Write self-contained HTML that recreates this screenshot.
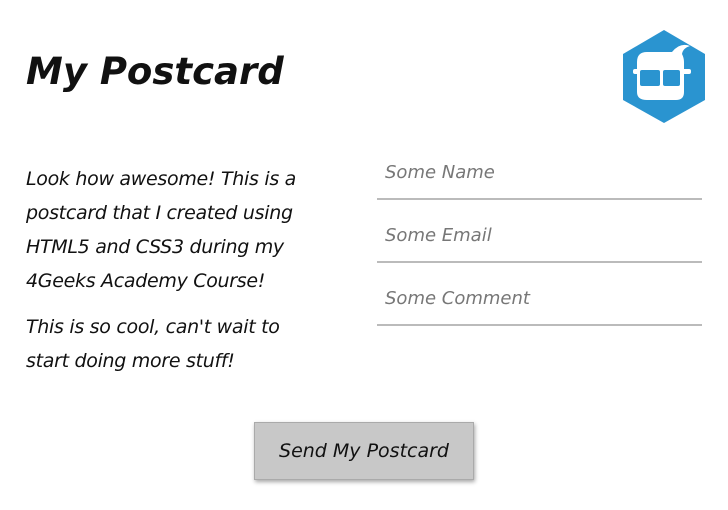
<html><head><style>
body{margin:0;width:728px;height:510px;background:#fff;font-family:"DejaVu Sans","Liberation Sans",sans-serif;font-style:oblique;color:#111;position:relative;overflow:hidden}
h1{position:absolute;left:26px;top:50px;margin:0;font-size:37px;font-weight:bold;letter-spacing:0px}
.txt{position:absolute;left:26px;top:162px;width:300px;font-size:19px;line-height:34px;letter-spacing:-0.3px}
.txt p{margin:0 0 12px 0}
.f{position:absolute;left:377px;width:325px;border-bottom:2px solid #bbb;height:42px;font-size:18px;color:#777}
.f span{position:absolute;left:8px}
.btn{position:absolute;left:254px;top:422px;width:220px;height:58px;background:#c8c8c8;border:1px solid #aaa;box-shadow:1px 2px 4px rgba(0,0,0,.35);font-size:19px;text-align:center;line-height:56px;box-sizing:border-box}
</style></head><body>
<h1>My Postcard</h1>
<svg style="position:absolute;left:618px;top:28px" width="92" height="97" viewBox="0 0 92 97">
<polygon points="46,2 87,26 87,72 46,95 5,72 5,26" fill="#2a94d0"/>
<path d="M19,34 Q19,24 29,24 L54,24 Q62,14 72,18 Q65,20 64,26 Q66,30 66,34 L66,64 Q66,72 58,72 L29,72 Q19,72 19,64 Z" fill="#fff"/>
<rect x="15" y="41" width="58" height="5" fill="#fff" rx="2"/>
<rect x="22" y="42" width="20" height="16" fill="#2a94d0" rx="2"/>
<rect x="45" y="42" width="17" height="16" fill="#2a94d0" rx="2"/>
</svg>
<div class="txt"><p>Look how awesome! This is a postcard that I created using HTML5 and CSS3 during my 4Geeks Academy Course!</p><p>This is so cool, can't wait to start doing more stuff!</p></div>
<div class="f" style="top:156px"><span style="top:6px">Some Name</span></div>
<div class="f" style="top:219px"><span style="top:6px">Some Email</span></div>
<div class="f" style="top:282px"><span style="top:6px">Some Comment</span></div>
<div class="btn">Send My Postcard</div>
</body></html>
